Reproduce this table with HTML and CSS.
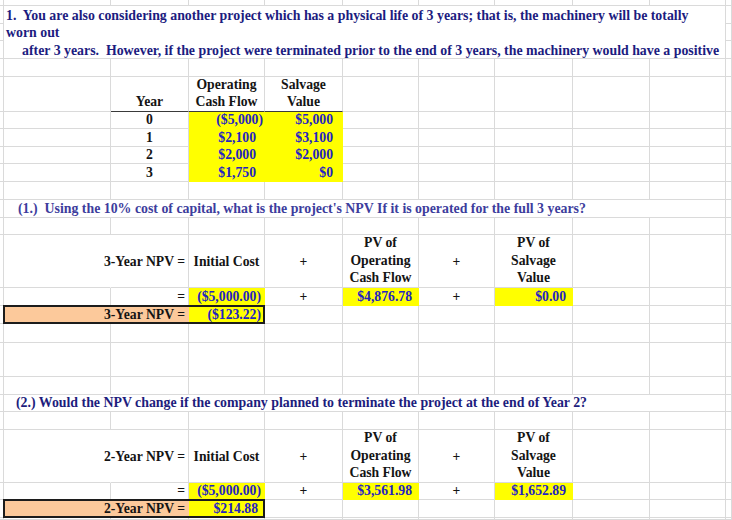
FILE: index.html
```html
<!DOCTYPE html>
<html lang="en">
<head>
<meta charset="utf-8">
<title>NPV worksheet</title>
<link rel="stylesheet" href="styles.css">
</head>
<body>
<div class="sheet">
  <!-- row 0 -->
  <div></div><div></div><div></div><div></div><div></div><div></div><div></div><div></div><div></div><div></div><div></div>
  <!-- rows 1-3: problem text -->
  <div></div>
  <div class="intro">1.&nbsp; You are also considering another project which has a physical life of 3 years; that is, the machinery will be totally<br>worn out<br><span class="indent">after 3 years.&nbsp; However, if the project were terminated prior to the end of 3 years, the machinery would have a positive</span></div>
  <div></div>
  <div></div><div></div>
  <div></div><div></div>
  <!-- row 4 -->
  <div></div><div></div><div></div><div></div><div></div><div></div><div></div><div></div><div></div><div></div><div></div>
  <!-- row 5: headers -->
  <div></div><div></div>
  <div class="hdr">Year</div>
  <div class="hdr">Operating<br>Cash Flow</div>
  <div class="hdr">Salvage<br>Value</div>
  <div></div><div></div><div></div><div></div><div></div><div></div>
  <!-- rows 6-9: data -->
  <div></div><div></div><div class="yr">0</div><div class="y neg">($5,000)</div><div class="y pos2">$5,000</div><div></div><div></div><div></div><div></div><div></div><div></div>
  <div></div><div></div><div class="yr">1</div><div class="y pos">$2,100</div><div class="y pos2">$3,100</div><div></div><div></div><div></div><div></div><div></div><div></div>
  <div></div><div></div><div class="yr">2</div><div class="y pos">$2,000</div><div class="y pos2">$2,000</div><div></div><div></div><div></div><div></div><div></div><div></div>
  <div></div><div></div><div class="yr">3</div><div class="y pos">$1,750</div><div class="y pos2">$0</div><div></div><div></div><div></div><div></div><div></div><div></div>
  <!-- row 10 -->
  <div></div><div></div><div></div><div></div><div></div><div></div><div></div><div></div><div></div><div></div><div></div>
  <!-- row 11: question 1 -->
  <div></div>
  <div class="q q1">(1.)&nbsp; Using the 10% cost of capital, what is the project's NPV If it is operated for the full 3 years?</div>
  <div></div>
  <!-- row 12 -->
  <div></div><div></div><div></div><div></div><div></div><div></div><div></div><div></div><div></div><div></div><div></div>
  <!-- row 13: formula labels -->
  <div></div><div class="nr"></div>
  <div class="lab mid">3-Year NPV =</div>
  <div class="ctr mid">Initial Cost</div>
  <div class="ctr mid">+</div>
  <div class="pv">PV of<br>Operating<br>Cash Flow</div>
  <div class="ctr mid">+</div>
  <div class="pv">PV of<br>Salvage<br>Value</div>
  <div></div><div></div><div></div>
  <!-- row 14: formula values -->
  <div></div><div></div>
  <div class="lab">=</div>
  <div class="y vneg">($5,000.00)</div>
  <div class="ctr">+</div>
  <div class="y vpos">$4,876.78</div>
  <div class="ctr">+</div>
  <div class="y vpos">$0.00</div>
  <div></div><div></div><div></div>
  <!-- row 15: result -->
  <div></div>
  <div class="result">
    <div class="res-label">3-Year NPV =</div>
    <div class="res-value">($123.22)</div>
  </div>
  <div></div><div></div><div></div><div></div><div></div><div></div><div></div>
  <!-- rows 16-18 -->
  <div></div><div></div><div></div><div></div><div></div><div></div><div></div><div></div><div></div><div></div><div></div>
  <div></div><div></div><div></div><div></div><div></div><div></div><div></div><div></div><div></div><div></div><div></div>
  <div></div><div></div><div></div><div></div><div></div><div></div><div></div><div></div><div></div><div></div><div></div>
  <!-- row 19: question 2 -->
  <div></div>
  <div class="q q2">(2.) Would the NPV change if the company planned to terminate the project at the end of Year 2?</div>
  <div></div>
  <!-- row 20 -->
  <div></div><div></div><div></div><div></div><div></div><div></div><div></div><div></div><div></div><div></div><div></div>
  <!-- row 21: formula labels -->
  <div></div><div class="nr"></div>
  <div class="lab mid">2-Year NPV =</div>
  <div class="ctr mid">Initial Cost</div>
  <div class="ctr mid">+</div>
  <div class="pv">PV of<br>Operating<br>Cash Flow</div>
  <div class="ctr mid">+</div>
  <div class="pv">PV of<br>Salvage<br>Value</div>
  <div></div><div></div><div></div>
  <!-- row 22: formula values -->
  <div></div><div></div>
  <div class="lab">=</div>
  <div class="y vneg">($5,000.00)</div>
  <div class="ctr">+</div>
  <div class="y vpos">$3,561.98</div>
  <div class="ctr">+</div>
  <div class="y vpos">$1,652.89</div>
  <div></div><div></div><div></div>
  <!-- row 23: result -->
  <div></div>
  <div class="result">
    <div class="res-label">2-Year NPV =</div>
    <div class="res-value pos-res">$214.88</div>
  </div>
  <div></div><div></div><div></div><div></div><div></div><div></div><div></div>
  <!-- row 24 -->
  <div></div><div></div><div></div><div></div><div></div><div></div><div></div><div></div><div></div><div></div><div></div>
</div>
</body>
</html>
```

FILE: styles.css
```css
html, body {
  margin: 0;
  padding: 0;
  background: #ffffff;
}

.sheet {
  width: 732px;
  height: 520px;
  overflow: hidden;
  display: grid;
  grid-template-columns: 4px 107px 78px 76px 78px 76px 76px 78px 77px 76px 1fr;
  grid-template-rows: 6px 18px 17px 18px 18px 35px 17px 18px 17px 18px 18px 18px 17px 53px 18px 18px 19px 34px 18px 17px 18px 53px 17px 18px 1fr;
  font-family: "Liberation Serif", "Times New Roman", serif;
  font-weight: bold;
  font-size: 13.7px;
  color: #141414;
}

.sheet > div {
  box-sizing: border-box;
  border-right: 1px solid #dadada;
  border-bottom: 1px solid #dadada;
  display: flex;
  align-items: flex-end;
  white-space: nowrap;
  line-height: 16px;
  min-width: 0;
}

.sheet > .intro {
  grid-column: span 9;
  grid-row: span 3;
  display: block;
  padding: 1px 0 0 2px;
  line-height: 17.4px;
  font-size: 13.85px;
  color: #1c1c80;
}

.intro .indent {
  padding-left: 16px;
}

.sheet > .hdr {
  justify-content: center;
  text-align: center;
  line-height: 17px;
  padding-bottom: 1px;
  border-bottom-color: #3a3a3a;
}

.sheet > .yr {
  justify-content: center;
}

.sheet > .y {
  background: #ffff00;
  border-color: #ffff00;
  justify-content: flex-end;
  color: #2323c2;
}

.sheet > .neg { padding-right: 1px; }
.sheet > .pos { padding-right: 8px; }
.sheet > .pos2 { padding-right: 9px; }
.sheet > .vneg { padding-right: 3px; }
.sheet > .vpos { padding-right: 6px; }

.sheet > .q {
  grid-column: span 9;
  font-size: 13.85px;
}

.sheet > .q1 {
  padding-left: 14px;
  color: #3d3d9d;
}

.sheet > .q2 {
  padding-left: 12px;
  color: #1d1d7d;
}

.sheet > .nr {
  border-right-color: #ffffff;
}

.sheet > .lab {
  justify-content: flex-end;
  padding-right: 3px;
}

.sheet > .ctr {
  justify-content: center;
}

.sheet > .mid {
  align-items: center;
  padding-top: 2px;
}

.sheet > .pv {
  justify-content: center;
  text-align: center;
  line-height: 17.6px;
}

.sheet > .result {
  grid-column: span 3;
  margin: -1px 0 0 -1px;
  border: 2px solid #1c1c1c;
  display: grid;
  grid-template-columns: 184px 1fr;
  line-height: 15px;
}

.res-label {
  background: #fcc99b;
  display: flex;
  align-items: flex-end;
  justify-content: flex-end;
  padding-right: 4px;
}

.res-value {
  background: #ffff00;
  color: #2323c2;
  display: flex;
  align-items: flex-end;
  justify-content: flex-end;
  padding-right: 2px;
}

.res-value.pos-res {
  padding-right: 5px;
}
```
